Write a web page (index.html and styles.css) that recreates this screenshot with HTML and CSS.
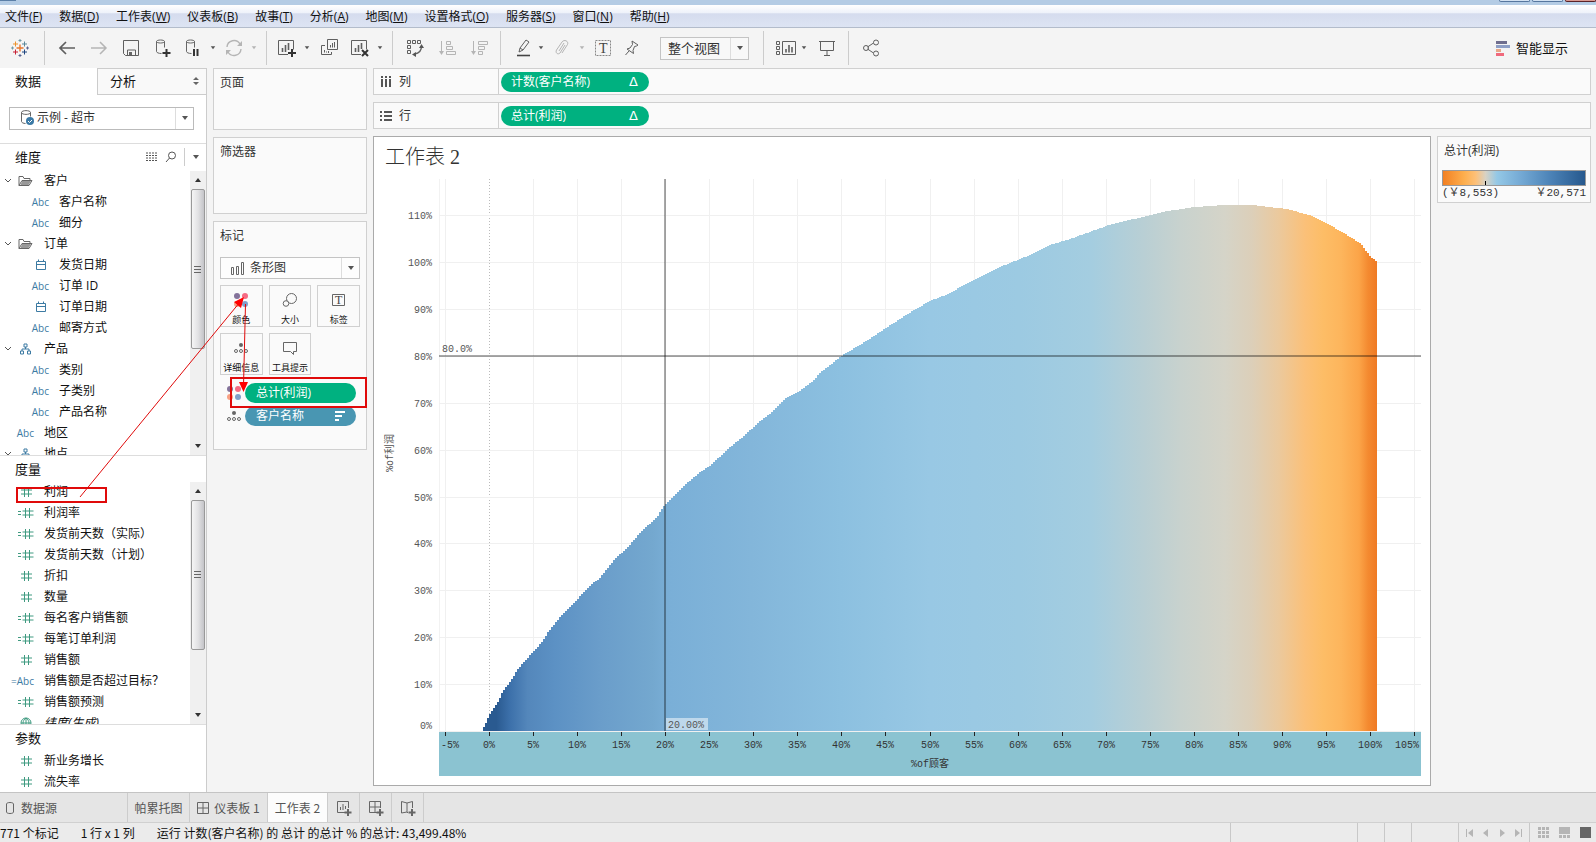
FILE: index.html
```html
<!DOCTYPE html>
<html lang="zh-CN">
<head>
<meta charset="utf-8">
<title>工作表 2</title>
<link rel="stylesheet" href="styles.css">
</head>
<body>
<svg class="defs" aria-hidden="true">
  <symbol id="hash" viewBox="0 0 16 12"><path d="M6.5 1v10M10.5 1v10M3 4h11M3 8h11" stroke="#3f9a80" fill="none"/></symbol>
  <symbol id="calchash" viewBox="0 0 16 12"><path d="M7.500 1v10M11.500 1v10M4.500 4h11M4.500 8h11M0 4.500h3M0 7.500h3" stroke="#3f9a80" fill="none"/></symbol>
  <symbol id="date" viewBox="0 0 12 12"><path d="M1.500 2.500h9v8h-9zM1.500 5.500h9M3.500 .5v2M8.500 .5v2" stroke="#3d7ba3" fill="none"/></symbol>
  <symbol id="folder" viewBox="0 0 15 12"><path d="M1 10.500V1.500h4l1 2h6v2M1 10.500l3-5h10l-3 5z" stroke="#666" fill="none"/><path d="M4 6h9l-2.500 4h-8z" fill="#999"/></symbol>
  <symbol id="hier" viewBox="0 0 12 12"><path d="M4.500 1h3v3h-3zM1 8h3v3h-3zM8 8h3v3h-3zM6 4v2M2.500 8V6h7v2" stroke="#3d7ba3" fill="none"/></symbol>
  <symbol id="chev" viewBox="0 0 8 6"><path d="M1 1l3 3 3-3" stroke="#555" fill="none"/></symbol>
  <symbol id="caret" viewBox="0 0 8 5"><path d="M1 0h6L4 4z" fill="currentColor"/></symbol>
  <symbol id="globe" viewBox="0 0 12 12"><path d="M1 6a5 5 0 0 1 10 0a5 5 0 0 1-10 0zM1 6h10M6 1v10M6 1C2 4 2 8 6 11M6 1c4 3 4 7 0 10" stroke="#3f9a80" fill="none"/></symbol>
  <symbol id="colors" viewBox="0 0 16 16"><circle cx="4" cy="4" r="3" fill="#84739b"/><circle cx="12" cy="4" r="3" fill="#f56b83"/><circle cx="4" cy="12" r="3" fill="#f8a184"/><circle cx="12" cy="12" r="3" fill="#7f9fca"/></symbol>
  <symbol id="detail" viewBox="0 0 16 12"><circle cx="8" cy="3" r="2" fill="#666"/><g fill="none" stroke="#666"><circle cx="3" cy="9" r="1.500"/><circle cx="8" cy="9" r="1.500"/><circle cx="13" cy="9" r="1.500"/></g></symbol>
  <symbol id="db" viewBox="0 0 20 20"><path d="M3.500 3.500c0-2 8-2 8 0s-8 2-8 0v10c0 1 2 2 5 2M11.500 3.500v6" stroke="#666" fill="none"/></symbol>
</svg>

<div class="app">
  <div class="titlebar"><i></i><b></b><b></b><b class="close"></b></div>
  <nav class="menu">
    <button>文件(<u>F</u>)</button><button>数据(<u>D</u>)</button><button>工作表(<u>W</u>)</button><button>仪表板(<u>B</u>)</button><button>故事(<u>T</u>)</button><button>分析(<u>A</u>)</button><button>地图(<u>M</u>)</button><button>设置格式(<u>O</u>)</button><button>服务器(<u>S</u>)</button><button>窗口(<u>N</u>)</button><button>帮助(<u>H</u>)</button>
  </nav>

  <div class="toolbar">
    <button class="tool" aria-label="起始页"><svg viewBox="0 0 20 20" fill="none"><path d="M10 6.500v7M6.500 10h7" stroke="#e8762c" stroke-width="1.400"/><path d="M5.500 3.500v5M3 6h5" stroke="#eb912c" /><path d="M14.500 3.500v5M12 6h5" stroke="#59879b"/><path d="M5.500 11.500v5M3 14h5" stroke="#c72035"/><path d="M14.500 11.500v5M12 14h5" stroke="#1f447e"/><path d="M10 1v3M8.500 2.500h3M2.500 8.500v3M1 10h3" stroke="#7199a6"/><path d="M10 16v3M8.500 17.500h3M17.500 8.500v3M16 10h3" stroke="#5b6591"/></svg></button>
    <span class="sep"></span>
    <button class="tool" aria-label="撤消"><svg viewBox="0 0 20 20"><path d="M18 10H3M9 4l-6 6 6 6" stroke-width="1.700"/></svg></button>
    <button class="tool dim" aria-label="重做"><svg viewBox="0 0 20 20"><path d="M2 10h15M11 4l6 6-6 6" stroke-width="1.500"/></svg></button>
    <button class="tool" aria-label="保存"><svg viewBox="0 0 20 20"><path d="M2.500 2.500h15v15H4.500l-2-2zM6.500 17v-5h8v5"/><path d="M8 14h3v3H8z" fill="#666" stroke="none"/></svg></button>
    <button class="tool" aria-label="新建数据源"><svg viewBox="0 0 20 20"><use href="#db"/><path d="M13.500 11v8M9.500 15h8" stroke="#333" stroke-width="2"/></svg></button>
    <button class="tool split" aria-label="暂停自动更新"><svg viewBox="0 0 20 20"><use href="#db"/><path d="M11 11v7M14.500 11v7" stroke="#333" stroke-width="2"/></svg></button>
    <button class="drop" aria-label="更多"><svg><use href="#caret"/></svg></button>
    <button class="tool split dim" aria-label="刷新"><svg viewBox="0 0 20 20"><path d="M3 9a7 7 0 0 1 13-3M17 11a7 7 0 0 1-13 3" stroke-width="1.400"/><path d="M18 3v5h-5zM2 17v-5h5z" fill="#b5b5b5" stroke="none"/></svg></button>
    <button class="drop dim" aria-label="更多"><svg><use href="#caret"/></svg></button>
    <span class="sep"></span>
    <button class="tool split flush" aria-label="新建工作表"><svg viewBox="0 0 20 20"><path d="M11 16.500H1.500v-14h15v9"/><path d="M5.500 10v4M8.500 7v7M11.500 5v7" stroke-width="1.600"/><path d="M15 11v8M11 15h8" stroke="#333" stroke-width="2"/></svg></button>
    <button class="drop" aria-label="更多"><svg><use href="#caret"/></svg></button>
    <button class="tool" aria-label="复制"><svg viewBox="0 0 20 20"><path d="M7.500 1.500h10v10h-10zM5 7.500H1.500v9h10V14M4.500 12v2.500M6.500 13.500v1M8.500 13v2M10.500 7v2.500M12.500 5v4.500M14.500 4v5.500"/></svg></button>
    <button class="tool split" aria-label="清除工作表"><svg viewBox="0 0 20 20"><path d="M11 16.500H1.500v-14h15v9"/><path d="M5.500 10v4M8.500 7v7M11.500 5v6" stroke-width="1.600"/><path d="M12 12l6 6M18 12l-6 6" stroke="#333" stroke-width="2"/></svg></button>
    <button class="drop" aria-label="更多"><svg><use href="#caret"/></svg></button>
    <span class="sep"></span>
    <button class="tool" aria-label="交换行和列"><svg viewBox="0 0 20 20"><path d="M2.500 2.500h3v3h-3zM7.500 2.500h3v3h-3zM12.500 2.500h3v3h-3zM2.500 7.500h3v3h-3zM2.500 12.500h3v3h-3z"/><path d="M16.500 8c0 5-3 7.500-7 8" stroke-width="1.400"/><path d="M16.500 6l2.500 4h-5zM7 16.500l4-2.500v5z" fill="#555" stroke="none"/></svg></button>
    <button class="tool dim" aria-label="升序"><svg viewBox="0 0 20 20"><path d="M4.500 3v12M9.500 3.500h4v3h-4zM9.500 8.500h6v3h-6zM9.500 13.500h9v3h-9z"/><path d="M2 13h5l-2.500 4z" fill="#b5b5b5" stroke="none"/></svg></button>
    <button class="tool dim" aria-label="降序"><svg viewBox="0 0 20 20"><path d="M4.500 3v12M9.500 3.500h9v3h-9zM9.500 8.500h6v3h-6zM9.500 13.500h4v3h-4z"/><path d="M2 13h5l-2.500 4z" fill="#b5b5b5" stroke="none"/></svg></button>
    <span class="sep"></span>
    <button class="tool split" aria-label="突出显示"><svg viewBox="0 0 20 20"><path d="M7 10l6-8 3 2-6 8-4 2zM7 10l3 2"/><path d="M4 17.500h13" stroke="#444" stroke-width="1.600"/></svg></button>
    <button class="drop" aria-label="更多"><svg><use href="#caret"/></svg></button>
    <button class="tool split dim" aria-label="分组"><svg viewBox="0 0 20 20"><path d="M13 7l-5 8c-2 2-5 0-3.500-3L10 4c2-3 7-1 5.500 2.500L10 15M12 5l-5 8"/></svg></button>
    <button class="drop dim" aria-label="更多"><svg><use href="#caret"/></svg></button>
    <button class="tool split serif" aria-label="显示标签"><svg viewBox="0 0 20 20"><path d="M2.500 2.500h15v15h-15z" stroke-dasharray="2 1" stroke="#888"/><text x="6" y="15">T</text></svg></button>
    <button class="tool" aria-label="固定"><svg viewBox="0 0 20 20"><path d="M10 3l6 4-1.500 1-2 .5-1.500 4 .5 3-6.500-4.500 3-1 2.500-3.500zM7 13l-3.500 4"/></svg></button>
    <button class="combo fit" aria-label="适合方式"><span>整个视图</span><i><svg><use href="#caret"/></svg></i></button>
    <span class="sep"></span>
    <button class="tool split" aria-label="显示卡"><svg viewBox="0 0 20 20"><path d="M.5 3.500h3v3h-3zM.5 8.500h3v3h-3zM.5 13.500h3v3h-3zM6.500 3.500h13v13h-13z"/><path d="M10 11v3.500M13 7v7.500M16 9v5.500" stroke-width="1.600"/></svg></button>
    <button class="drop" aria-label="更多"><svg><use href="#caret"/></svg></button>
    <button class="tool" aria-label="演示模式"><svg viewBox="0 0 20 20"><path d="M2 3.500h16M3.500 4v8.500h13V4M10 12.500v5M7 17.500h6" /></svg></button>
    <span class="sep"></span>
    <button class="tool" aria-label="共享"><svg viewBox="0 0 20 20"><path d="M6.500 9l6-4M6.500 11l6 4"/><circle cx="5" cy="10" r="2.500"/><circle cx="15" cy="4.500" r="2.500"/><circle cx="15" cy="15.500" r="2.500"/></svg></button>
    <button class="showme"><svg viewBox="0 0 14 15"><path d="M0 0h11v3H0z" fill="#6f6e8e"/><path d="M0 4h14v3H0z" fill="#8f9fc6"/><path d="M0 8h5v3H0z" fill="#e8a888"/><path d="M0 12h8v3H0z" fill="#f0697c"/></svg>智能显示</button>
  </div>

  <main class="work">
    <aside class="data">
      <div class="tabs"><button class="on">数据</button><button>分析<svg viewBox="0 0 6 8"><path d="M0 3h6L3 0zM0 5h6L3 8z" fill="#666"/></svg></button></div>
      <div class="source">
        <button class="combo"><svg class="dbi" viewBox="0 0 18 18"><path d="M2.500 3.500c0-2.500 9-2.500 9 0s-9 2.500-9 0v9c0 1 2 2 4 2M11.500 3.500v4" stroke="#666" fill="none"/><circle cx="11" cy="12" r="4" fill="#3b7aa6"/><path d="M9 12l1.500 1.500L13 11" stroke="#fff" fill="none"/></svg><span>示例 - 超市</span><i><svg><use href="#caret"/></svg></i></button>
      </div>
      <section class="dims">
        <header><h2>维度</h2><svg class="hi" viewBox="0 0 12 10"><path d="M0 1h12M0 3.500h12M0 6h12M0 8.500h12" stroke="#555" stroke-dasharray="2 1"/></svg><svg class="hi" viewBox="0 0 12 12"><circle cx="7" cy="4.500" r="3.500" stroke="#555" fill="none"/><path d="M4.500 7L1 11" stroke="#555"/></svg><span class="hd"><svg><use href="#caret"/></svg></span></header>
        <div class="scroll">
          <ul>
            <li class="group"><svg class="chev"><use href="#chev"/></svg><svg class="fi"><use href="#folder"/></svg>客户</li>
            <li class="sub"><em>Abc</em>客户名称</li>
            <li class="sub"><em>Abc</em>细分</li>
            <li class="group"><svg class="chev"><use href="#chev"/></svg><svg class="fi"><use href="#folder"/></svg>订单</li>
            <li class="sub"><em><svg><use href="#date"/></svg></em>发货日期</li>
            <li class="sub"><em>Abc</em>订单 ID</li>
            <li class="sub"><em><svg><use href="#date"/></svg></em>订单日期</li>
            <li class="sub"><em>Abc</em>邮寄方式</li>
            <li class="group"><svg class="chev"><use href="#chev"/></svg><svg class="fi"><use href="#hier"/></svg>产品</li>
            <li class="sub"><em>Abc</em>类别</li>
            <li class="sub"><em>Abc</em>子类别</li>
            <li class="sub"><em>Abc</em>产品名称</li>
            <li><em>Abc</em>地区</li>
            <li class="group"><svg class="chev"><use href="#chev"/></svg><svg class="fi"><use href="#hier"/></svg>地点</li>
          </ul>
          <div class="bar"><svg class="up"><use href="#caret"/></svg><div class="thumb"></div><svg><use href="#caret"/></svg></div>
        </div>
      </section>
      <section class="meas">
        <header><h2>度量</h2></header>
        <div class="scroll">
          <ul>
            <li><em><svg><use href="#hash"/></svg></em>利润</li>
            <li><em><svg><use href="#calchash"/></svg></em>利润率</li>
            <li><em><svg><use href="#calchash"/></svg></em>发货前天数（实际）</li>
            <li><em><svg><use href="#calchash"/></svg></em>发货前天数（计划）</li>
            <li><em><svg><use href="#hash"/></svg></em>折扣</li>
            <li><em><svg><use href="#hash"/></svg></em>数量</li>
            <li><em><svg><use href="#calchash"/></svg></em>每名客户销售额</li>
            <li><em><svg><use href="#calchash"/></svg></em>每笔订单利润</li>
            <li><em><svg><use href="#hash"/></svg></em>销售额</li>
            <li><em>=Abc</em>销售额是否超过目标？</li>
            <li><em><svg><use href="#calchash"/></svg></em>销售额预测</li>
            <li class="gen"><em><svg><use href="#globe"/></svg></em>纬度(生成)</li>
          </ul>
          <div class="bar"><svg class="up"><use href="#caret"/></svg><div class="thumb"></div><svg><use href="#caret"/></svg></div>
        </div>
      </section>
      <section class="params">
        <header><h2>参数</h2></header>
        <ul>
          <li><em><svg><use href="#hash"/></svg></em>新业务增长</li>
          <li><em><svg><use href="#hash"/></svg></em>流失率</li>
        </ul>
      </section>
    </aside>

    <div class="cards">
      <section class="card pages"><h3>页面</h3></section>
      <section class="card filters"><h3>筛选器</h3></section>
      <section class="card marks">
        <h3>标记</h3>
        <button class="combo"><svg class="mi" viewBox="0 0 14 13"><path d="M.5 5.500h2v7h-2zM5.500 4.500h2v8h-2zM10.500 .5h2v12h-2z" fill="none" stroke="#666"/></svg><span>条形图</span><i><svg><use href="#caret"/></svg></i></button>
        <div class="mgrid">
          <button><svg viewBox="0 0 16 16"><use href="#colors"/></svg>颜色</button>
          <button><svg viewBox="0 0 16 16" fill="none" stroke="#666"><circle cx="9.500" cy="6.500" r="5"/><circle cx="4" cy="11.500" r="2.800" fill="#fafafa"/></svg>大小</button>
          <button class="serif"><svg viewBox="0 0 16 16"><path d="M1.500 2.500h12v11h-12z" fill="none" stroke="#666"/><text x="4" y="12">T</text></svg>标签</button>
          <button><svg viewBox="0 0 16 16"><use href="#detail" width="16" height="12" y="2"/></svg>详细信息</button>
          <button><svg viewBox="0 0 16 16" fill="none" stroke="#666"><path d="M1.500 2.500h13v9h-3v3l-3-3h-7z"/></svg>工具提示</button>
        </div>
        <div class="pillrow"><svg viewBox="0 0 16 16"><use href="#colors"/></svg><button class="pill green">总计(利润)</button></div>
        <div class="pillrow"><svg viewBox="0 0 16 12"><use href="#detail"/></svg><button class="pill blue">客户名称<svg viewBox="0 0 10 10"><path d="M0 1h10M0 5h7M0 9h4" stroke="#fff" stroke-width="2"/></svg></button></div>
      </section>
    </div>

    <div class="stage">
      <div class="shelf"><label><svg viewBox="0 0 12 12"><path d="M1 0h2v2H1zM5 0h2v2H5zM9 0h2v2H9zM1 3h2v8H1zM5 3h2v8H5zM9 3h2v8H9z" fill="#555"/></svg>列</label><button class="pill green">计数(客户名称)<span>Δ</span></button></div>
      <div class="shelf"><label><svg viewBox="0 0 12 12"><path d="M0 1h2v2H0zM0 5h2v2H0zM0 9h2v2H0zM4 1h8v2H4zM4 5h8v2H4zM4 9h8v2H4z" fill="#555"/></svg>行</label><button class="pill green">总计(利润)<span>Δ</span></button></div>
      <div class="canvas">
        <section class="view">
          <h1>工作表 2</h1>
          <svg id="chart" viewBox="0 0 1056 612" role="img" aria-label="帕累托图"></svg>
        </section>
        <section class="legend">
          <h3>总计(利润)</h3>
          <div class="ramp"><i></i></div>
          <div class="ends"><span>(￥8,553)</span><span>￥20,571</span></div>
        </section>
      </div>
    </div>

    <svg class="notes" viewBox="0 0 400 724" aria-hidden="true">
      <g fill="none" stroke="#e00a0a">
        <path d="M17 420h89v14H17zM231 310h135v29H231z" stroke-width="2"/>
        <path d="M80 429L240 234M245.500 236L243.500 318"/>
      </g>
      <path d="M244 229l-3 11-7-6zM239 314h9l-4.500 10z" fill="#f00"/>
    </svg>
  </main>

  <nav class="sheets">
    <button class="ds"><svg viewBox="0 0 12 14"><path d="M2.500 3c0-2 7-2 7 0v8c0 2-7 2-7 0z"/></svg>数据源</button>
    <button class="w62">帕累托图</button>
    <button class="w78"><svg viewBox="0 0 12 12"><path d="M.5 .5h11v11H.5zM6 0v12M0 6h12"/></svg>仪表板 1</button>
    <button class="w60 on">工作表 2</button>
    <button class="add" aria-label="新建工作表"><svg viewBox="0 0 16 16"><path d="M9 12.500H1.500v-11h11V8M4.500 7v3M7 4v6M9.500 6v3"/><path d="M12 9v7M8.500 12.500h7" stroke-width="2"/></svg></button>
    <button class="add" aria-label="新建仪表板"><svg viewBox="0 0 16 16"><path d="M9 12.500H1.500v-11h11V8M7 1v11M1 7h11"/><path d="M12 9v7M8.500 12.500h7" stroke-width="2"/></svg></button>
    <button class="add" aria-label="新建故事"><svg viewBox="0 0 16 16"><path d="M8 13l-1-1-5.500 1V1.500L7 3l5.500-1.500V8M7 3v9"/><path d="M12 9v7M8.500 12.500h7" stroke-width="2"/></svg></button>
  </nav>

  <footer class="status">
    <span>771 个标记</span><span>1 行 x 1 列</span><span>运行 计数(客户名称) 的 总计 的总计 % 的总计: 43,499.48%</span>
    <div class="cells"><i class="c1"></i><i class="c2"></i><i class="c2"></i><i class="c3"></i>
      <div class="nav"><svg viewBox="0 0 8 8"><path d="M0 0h1v8H0zM7 0v8L2 4z"/></svg><svg viewBox="0 0 8 8"><path d="M6 0v8L1 4z"/></svg><svg viewBox="0 0 8 8"><path d="M2 0v8l5-4z"/></svg><svg viewBox="0 0 8 8"><path d="M7 0h1v8H7zM1 0v8l5-4z"/></svg></div>
      <div class="modes"><svg viewBox="0 0 11 11"><path d="M0 0h3v3H0zM4 0h3v3H4zM8 0h3v3H8zM0 4h3v3H0zM4 4h3v3H4zM8 4h3v3H8zM0 8h3v3H0zM4 8h3v3H4zM8 8h3v3H8z"/></svg><svg viewBox="0 0 11 11"><path d="M0 0h11v7H0zM0 8h3v3H0zM4 8h3v3H4zM8 8h3v3H8z"/></svg><svg class="cur" viewBox="0 0 11 11"><path d="M0 0h11v11H0z"/></svg></div>
    </div>
  </footer>
</div>
<script src="chart.js"></script>
</body>
</html>
```

FILE: styles.css
```css
* { box-sizing: border-box; }
body { margin: 0; font: 12px/20px "Open Sans", "Noto Sans CJK SC", sans-serif; color: #111; background: #f4f4f4; }
button { font: inherit; color: inherit; background: none; border: 0; padding: 0; margin: 0; text-align: left; white-space: nowrap; }
h1, h2, h3, ul { margin: 0; padding: 0; font-weight: 400; list-style: none; }
h3 { font-size: 12px; }
svg { flex: none; display: block; }
.defs { display: none; }
.app { display: flex; flex-direction: column; height: 100vh; overflow: hidden; }

.titlebar { display: flex; justify-content: flex-end; gap: 2px; height: 5px; background: #b4cce5; }
.titlebar i { width: 16px; height: 1px; background: #5c80a8; margin-right: auto; }
.titlebar b { width: 31px; height: 2px; border: 1px solid #56779f; border-top: 0; border-radius: 0 0 3px 3px; background: #d3e2f2; }
.titlebar .close { border-color: #5b2328; background: #d99a92; }
.menu { display: flex; gap: 17px; height: 23px; padding: 1px 5px 0; border-bottom: 1px solid #b3bccb; background: linear-gradient(#fff, #eef2fa 35%, #d5dcee 40%, #dde4f3); }
.menu u { text-underline-offset: 1px; }

.toolbar { display: flex; align-items: center; height: 40px; padding-left: 4px; }
.tool { width: 32px; display: flex; justify-content: center; }
.tool.split { width: 27px; }
.sep + .split { padding-left: 5px; }
.sep + .split.flush { padding-left: 0; }
.tool svg { width: 20px; height: 20px; fill: none; stroke: #5f5f5f; }
.tool.dim svg { stroke: #b5b5b5; }
.tool:first-child { margin-right: 3px; }
.serif text { font: 12px "Liberation Serif", serif; fill: #444; stroke: none; }
.tool.serif text { font-size: 14px; }
.drop { width: 14px; display: flex; justify-content: center; color: #555; }
.drop.dim { color: #b5b5b5; }
.drop svg { width: 6px; height: 4px; }
.combo i svg, .hd svg, .bar > svg { width: 8px; height: 5px; }
.sep { width: 1px; height: 34px; margin: 0 6px 0 5px; background: #ccc; }
.combo { display: flex; align-items: center; width: 100%; height: 22px; border: 1px solid #c4c4c4; background: #fdfdfd; color: #333; }
.combo i { display: flex; align-items: center; justify-content: center; align-self: stretch; width: 18px; margin-left: auto; border-left: 1px solid #ddd; color: #555; }
.fit { width: 89px; height: 23px; margin: 0 9px 0 12px; padding-left: 7px; font-size: 13px; background: #f8f8f8; }
.showme { display: flex; align-items: center; gap: 6px; margin: 0 28px 0 auto; font-size: 13px; }
.showme svg { width: 14px; height: 15px; }

.work { position: relative; display: flex; flex: 1; min-height: 0; gap: 6px; padding-right: 5px; }
.data { display: flex; flex-direction: column; width: 207px; flex: none; background: #fff; border-right: 1px solid #ccc; }
.tabs { display: flex; height: 27px; font-size: 13px; }
.tabs button { flex: 1; display: flex; align-items: center; padding: 0 7px 0 12px; border: solid #ccc; border-width: 1px 0 1px 1px; background: #f9f9f9; }
.tabs .on { flex: 0 0 97px; padding-left: 15px; background: #fff; border-width: 0; }
.tabs svg { width: 6px; height: 8px; margin-left: auto; }
.source { padding: 12px 12px 12px 9px; height: 48px; }
.source .combo { height: 23px; border-color: #bbb; background: #fff; }
.dbi { width: 18px; height: 18px; margin: 0 0 0 9px; }
.data section { border-top: 1px solid #ddd; display: flex; flex-direction: column; min-height: 0; }
.data header { display: flex; align-items: center; height: 27px; flex: none; padding-left: 15px; }
.data h2 { font-size: 13px; margin-right: auto; }
.hi { width: 12px; height: 12px; margin-right: 7px; }
.hd { display: flex; align-items: center; justify-content: center; width: 22px; height: 18px; border-left: 1px solid #ccc; color: #555; }
.dims { flex: 0 0 312px; }
.meas { flex: 0 0 269px; }
.data .meas header, .data .params header { height: 26px; }
.scroll { display: flex; flex: 1; min-height: 0; }
.scroll ul { flex: 1; overflow: hidden; }
.data li { display: flex; align-items: center; height: 21px; white-space: nowrap; }
.data em { width: 44px; padding-right: 10px; text-align: right; font: 10px "Open Sans", sans-serif; color: #3d7ba3; display: flex; justify-content: flex-end; }
.data em svg { width: 16px; height: 12px; }
.data .sub em { width: 59px; padding-right: 10px; }
.data .group svg { width: 15px; height: 12px; margin-right: 11px; }
.data .group .chev { width: 8px; height: 6px; margin: 0 6px 0 4px; }
.gen { font-style: italic; }
.bar { display: flex; flex-direction: column; align-items: center; width: 16px; padding: 6px 1px 6px 0; background: #f0f0f0; color: #333; }
.bar .up { transform: rotate(180deg); }
.bar .thumb { --grip: 76px; width: 14px; height: 160px; margin: 7px 0 auto; border: 1px solid #999; border-radius: 2px; background: linear-gradient(#666, #666) center var(--grip) / 7px 1px no-repeat, linear-gradient(#666, #666) center calc(var(--grip) + 3px) / 7px 1px no-repeat, linear-gradient(#666, #666) center calc(var(--grip) + 6px) / 7px 1px no-repeat, linear-gradient(90deg, #f5f5f5, #e2e2e4 50%, #c4c4c8); }
.meas .thumb { --grip: 70px; height: 150px; }

.cards { display: flex; flex-direction: column; gap: 7px; width: 154px; flex: none; }
.card, .shelf, .legend { border: 1px solid #d0d0d0; background: #fafafa; }
.card { padding: 4px 6px; color: #333; }
.pages { height: 62px; }
.filters { height: 77px; }
.marks { height: 229px; }
.marks .combo { margin-top: 11px; height: 22px; }
.mi { width: 14px; height: 13px; margin: 0 5px 0 10px; }
.mgrid { display: grid; grid-template-columns: repeat(3, 1fr); gap: 6px; margin: 6px 0 8px; }
.mgrid button { display: flex; flex-direction: column; align-items: center; justify-content: flex-end; height: 42px; border: 1px solid #d0d0d0; font-size: 9px; line-height: 12px; color: #111; overflow: hidden; }
.mgrid svg { width: 16px; height: 16px; margin-bottom: 6px; }
.pillrow { display: flex; align-items: center; gap: 3px; margin: 0 4px 3px 6px; }
.pillrow > svg { width: 16px; height: 16px; }
.pill { display: flex; align-items: center; justify-content: space-between; height: 20px; border-radius: 10px; padding: 0 11px; color: #fff; flex: 1; }
.pill svg { width: 10px; height: 10px; }
.pill span { font: 13px "DejaVu Sans", sans-serif; }
.green { background: #00b180; }
.blue { background: #4996b2; }

.stage { display: flex; flex-direction: column; flex: 1; min-width: 0; gap: 7px; padding-bottom: 6px; }
.shelf { display: flex; align-items: center; height: 27px; flex: none; }
.shelf label { display: flex; align-items: center; align-self: stretch; gap: 7px; width: 125px; padding-left: 6px; margin-right: 2px; border-right: 1px solid #d0d0d0; color: #333; }
.shelf label svg { width: 12px; height: 12px; }
.shelf .pill { flex: 0 0 148px; padding-left: 10px; }
.canvas { display: flex; flex: 1; min-height: 0; gap: 6px; }
.view { flex: 1; min-width: 0; display: flex; flex-direction: column; border: 1px solid #aaa; background: #fff; }
.view h1 { height: 36px; padding: 0 11px; font: 300 20px/40px "Liberation Serif", "Noto Sans CJK SC", serif; color: #333; }
#chart { width: 100%; flex: 1; min-height: 0; font: 10px "Liberation Mono", "Noto Sans CJK SC", monospace; fill: #555; }
.legend { width: 154px; height: 67px; padding: 4px 4px 0; color: #333; }
.legend h3 { padding-left: 2px; }
.ramp { display: flex; align-items: flex-end; height: 16px; margin-top: 9px; border: 1px solid #999; background: linear-gradient(90deg, #f28022, #fdaf4e 15%, #fdc078 23%, #d8d2c4 30%, #94c8e6 38%, #74a9d4 55%, #4d84b8 75%, #26588d); }
.ramp i { width: 1px; height: 4px; margin-left: 42px; background: #000; }
.ends { display: flex; justify-content: space-between; font: 11px/14px "Liberation Mono", "Noto Sans CJK SC", monospace; }
.notes { position: absolute; left: 0; top: 0; width: 400px; height: 724px; pointer-events: none; }

.sheets { display: flex; height: 30px; flex: none; background: #e5e5e5; border-top: 1px solid #c4c4c4; color: #555; font-family: "Noto Sans CJK SC", sans-serif; }
.sheets button { display: flex; align-items: center; justify-content: center; gap: 5px; border-right: 1px solid #ccc; }
.sheets svg { width: 12px; height: 14px; fill: none; stroke: #666; }
.sheets .ds { width: 128px; justify-content: flex-start; padding-left: 4px; }
.w62 { width: 62px; }
.w78 { width: 78px; }
.w60 { width: 60px; }
.sheets .on { background: #fcfcfc; }
.sheets .add { width: 32px; }
.sheets .add svg { width: 16px; height: 16px; }
.status { display: flex; gap: 22px; height: 20px; flex: none; border-top: 1px solid #d0d0d0; background: #ebebeb; font-family: "Noto Sans CJK SC", sans-serif; line-height: 19px; white-space: nowrap; }
.cells { display: flex; margin-left: auto; fill: #b5b5b5; }
.cells > * { border-left: 1px solid #c8c8c8; }
.c1 { width: 127px; }
.c2 { width: 27px; }
.c3 { width: 47px; }
.nav, .modes { display: flex; align-items: center; }
.nav { width: 71px; gap: 8px; padding-left: 7px; }
.nav svg { width: 8px; height: 8px; }
.modes { width: 67px; gap: 10px; padding-left: 8px; }
.modes svg { width: 11px; height: 11px; }
.modes .cur { fill: #666; }
```

FILE: chart.js
```js
const NS = "http://www.w3.org/2000/svg";
const chart = document.getElementById("chart");
const plot = { left: 65, right: 1047, top: 6, bottom: 558 };
const x = p => Math.round(115 + 8.81 * p);
const y = p => Math.round(558 - 4.69 * p);

function add(name, attrs, text) {
  const el = document.createElementNS(NS, name);
  for (const key in attrs) el.setAttribute(key, attrs[key]);
  if (text) el.textContent = text;
  chart.appendChild(el);
  return el;
}

function line(x1, y1, x2, y2, stroke, extra) {
  add("line", Object.assign({ x1, y1, x2, y2, stroke, "shape-rendering": "crispEdges" }, extra));
}

const stops = [
  [0, "#2a5a90"], [1.5, "#2a5a90"], [3, "#3c70aa"], [5, "#5487bb"], [8, "#5c91c4"],
  [13, "#6a9dca"], [19, "#74a8cf"], [21, "#7aafd7"], [30, "#83b6da"], [40, "#8cc0e0"],
  [50, "#98c8e4"], [60, "#9ccae2"], [68, "#a4cde0"], [74, "#b9cfd4"], [78, "#c8d2ce"],
  [83, "#d5d4c8"], [86, "#dccfb9"], [89, "#ebc99d"], [92, "#fbc078"], [94, "#fdbd66"],
  [96, "#fdb55c"], [98, "#fba448"], [99, "#f48a30"], [100, "#ef7a24"]
];
const defs = add("defs", {});
defs.innerHTML = '<linearGradient id="profit">' +
  stops.map(s => `<stop offset="${s[0]}%" stop-color="${s[1]}"/>`).join("") +
  "</linearGradient>";

for (let p = -5; p <= 105; p += 5) {
  if (p === 0) line(x(p), plot.top, x(p), plot.bottom, "#bbb", { "stroke-dasharray": "1 2" });
  else line(x(p), plot.top, x(p), plot.bottom, "#f0f0f0");
}
line(plot.left, plot.top, plot.left, plot.bottom, "#f2f2f2");
for (let p = 0; p <= 110; p += 10) {
  line(plot.left, y(p), plot.right, y(p), "#f0f0f0");
  add("text", { x: 58, y: p ? y(p) + 4 : y(p) - 2, "text-anchor": "end" }, p + "%");
}

const curve = [
  [109, 554], [115, 541], [123, 529], [128, 518], [136, 508], [143, 496], [158, 479],
  [168, 468], [173, 459], [185, 444], [202, 427], [207, 421], [218, 410], [223, 407],
  [239, 387], [253, 374], [266, 359], [283, 343], [288, 334], [294, 328], [311, 311],
  [324, 300], [336, 292], [354, 275], [369, 263], [383, 250], [396, 240], [411, 225],
  [426, 217], [439, 207], [446, 199], [468, 182], [493, 167], [511, 155], [539, 137],
  [555, 128], [573, 121], [591, 111], [620, 96], [650, 84], [678, 71], [695, 66],
  [734, 52], [759, 46], [787, 39], [820, 34], [848, 32], [877, 32], [912, 36],
  [934, 42], [955, 52], [977, 65], [986, 71], [996, 84], [1003, 89]
];

// Each customer is a narrow bar, so the top edge rises in small steps.
const steps = [];
const barWidth = 2;
let seg = 0;
for (let bx = 109; bx < 1003; bx += barWidth) {
  while (curve[seg + 1][0] < bx) seg++;
  const [x0, y0] = curve[seg];
  const [x1, y1] = curve[seg + 1];
  const top = Math.round(y0 + (y1 - y0) * (bx - x0) / (x1 - x0));
  steps.push([bx, top], [bx + barWidth, top]);
}
add("polygon", {
  points: `109,${plot.bottom} ` + steps.join(" ") + ` 1003,${plot.bottom}`,
  fill: "url(#profit)", "shape-rendering": "crispEdges"
});

line(x(20), plot.top, x(20), plot.bottom, "#000", { "stroke-opacity": 0.34, "stroke-width": 2 });
line(plot.left, y(80), plot.right, y(80), "#000", { "stroke-opacity": 0.34, "stroke-width": 2 });
add("text", { x: 68, y: 179 }, "80.0%");
add("rect", { x: x(20) + 1, y: 545, width: 42, height: 12, fill: "#fff", "fill-opacity": 0.5 });
add("text", { x: x(20) + 3, y: 555 }, "20.00%");

add("rect", { x: plot.left, y: 559, width: plot.right - plot.left, height: 44, fill: "#8bc3d1" });
for (let p = -5; p <= 105; p += 5) {
  line(x(p), 559, x(p), 563, "#222");
  const tx = p === -5 ? x(p) + 5 : p === 105 ? x(p) - 7 : x(p);
  add("text", { x: tx, y: 575, "text-anchor": "middle", fill: "#333" }, p + "%");
}
add("text", { x: 556, y: 594, "text-anchor": "middle", fill: "#333" }, "%of顾客");
add("text", { transform: "translate(19 280) rotate(-90)", "text-anchor": "middle" }, "%of利润");
```
